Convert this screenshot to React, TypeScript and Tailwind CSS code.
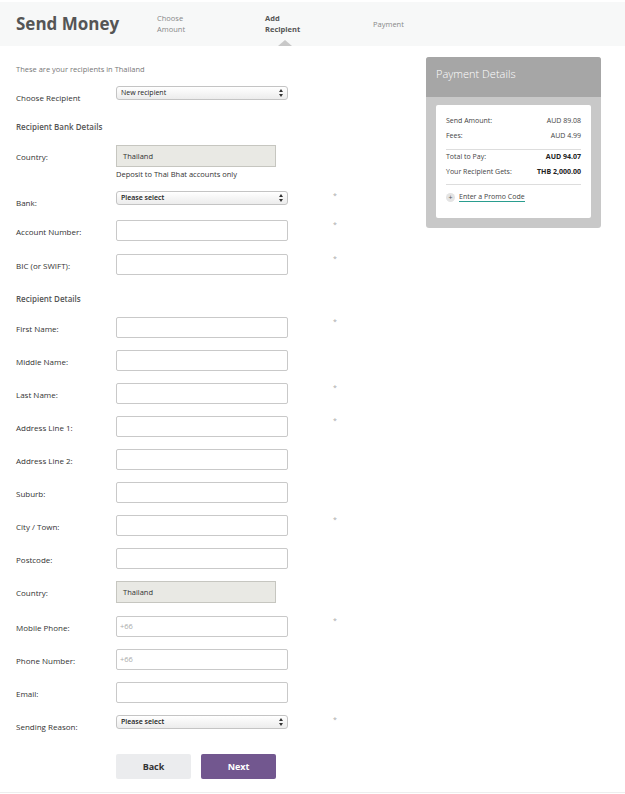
import React from 'react';

const font = { fontFamily: '"Open Sans", "Liberation Sans", sans-serif' };

type RowKind = 'text' | 'select' | 'grey';

interface FieldRow {
  label: string;
  kind: RowKind;
  mt: string;
  required?: boolean;
  value?: string;
  placeholder?: string;
  bold?: boolean;
}

const rowHeight: Record<RowKind, string> = {
  text: 'h-[21px]',
  select: 'h-[14px]',
  grey: 'h-[22px]',
};

const Arrows = () => (
  <svg width="4" height="8" viewBox="0 0 4 8" className="absolute right-[4px] top-[2px]">
    <path d="M2 0 L4 3 L0 3 Z" fill="#333" />
    <path d="M2 8 L4 5 L0 5 Z" fill="#333" />
  </svg>
);

const Row = ({ label, kind, mt, required, value, placeholder, bold }: FieldRow) => (
  <div className={`flex items-start ${rowHeight[kind]} ${mt}`}>
    <div className="w-[100px] shrink-0 pt-[7px] text-[8px] leading-[10px] text-[#333]">{label}</div>
    {kind === 'text' && (
      <div className="h-[21px] w-[172px] rounded-[2px] border border-[#c9c9c9] bg-white pl-[3px] text-[7.5px] leading-[19px] text-[#aaa]">
        {placeholder}
      </div>
    )}
    {kind === 'select' && (
      <div
        className={`relative h-[14px] w-[172px] rounded-[3px] border border-[#c4c4c4] bg-gradient-to-b from-white to-[#ececec] pl-[4px] text-[7px] leading-[12px] text-[#222] ${
          bold ? 'font-semibold' : ''
        }`}
      >
        {value}
        <Arrows />
      </div>
    )}
    {kind === 'grey' && (
      <div className="h-[22px] w-[160px] border border-[#c6c6c0] bg-[#e9e9e4] pl-[6px] text-[7.5px] leading-[20px] text-[#333]">
        {value}
      </div>
    )}
    {required && <div className="ml-[45px] mt-[1px] text-[7px] leading-[8px] text-[#aaa]">*</div>}
  </div>
);

const Heading = ({ children, mt }: { children: React.ReactNode; mt: string }) => (
  <div className={`${mt} text-[8px] font-semibold leading-[10px] text-[#555]`}>{children}</div>
);

const recipientRows: FieldRow[] = [
  { label: 'First Name:', kind: 'text', mt: 'mt-[13px]', required: true },
  { label: 'Middle Name:', kind: 'text', mt: 'mt-[12px]' },
  { label: 'Last Name:', kind: 'text', mt: 'mt-[12px]', required: true },
  { label: 'Address Line 1:', kind: 'text', mt: 'mt-[12px]', required: true },
  { label: 'Address Line 2:', kind: 'text', mt: 'mt-[12px]' },
  { label: 'Suburb:', kind: 'text', mt: 'mt-[12px]' },
  { label: 'City / Town:', kind: 'text', mt: 'mt-[12px]', required: true },
  { label: 'Postcode:', kind: 'text', mt: 'mt-[12px]' },
  { label: 'Country:', kind: 'grey', mt: 'mt-[12px]', value: 'Thailand' },
  { label: 'Mobile Phone:', kind: 'text', mt: 'mt-[13px]', required: true, placeholder: '+66' },
  { label: 'Phone Number:', kind: 'text', mt: 'mt-[12px]', placeholder: '+66' },
  { label: 'Email:', kind: 'text', mt: 'mt-[12px]' },
  { label: 'Sending Reason:', kind: 'select', mt: 'mt-[12px]', required: true, value: 'Please select', bold: true },
];

const Step = ({ lines, active }: { lines: string[]; active?: boolean }) => (
  <div
    className={`relative flex h-full w-[108px] flex-col justify-center text-[7.5px] leading-[11px] ${
      active ? 'font-bold text-[#555]' : 'text-[#888]'
    }`}
  >
    {lines.map((l) => (
      <span key={l}>{l}</span>
    ))}
    {active && (
      <div className="absolute bottom-0 left-[13px] h-0 w-0 border-x-[7px] border-b-[6px] border-x-transparent border-b-[#c8c8c8]" />
    )}
  </div>
);

const SummaryLine = ({ left, right, strong }: { left: string; right: string; strong?: boolean }) => (
  <div className="flex h-[15px] items-center justify-between text-[7px] text-[#444]">
    <span>{left}</span>
    <span className={strong ? 'font-bold text-[#222]' : ''}>{right}</span>
  </div>
);

export default function App() {
  return (
    <div style={font} className="min-h-[794px] w-[625px] bg-white">
      <div className="mt-[2px] flex h-[44px] items-center bg-[#f7f8f8]">
        <div className="w-[157px] pl-4 text-[17px] font-bold text-[#555]">Send Money</div>
        <Step lines={['Choose', 'Amount']} />
        <Step lines={['Add', 'Recipient']} active />
        <Step lines={['Payment']} />
      </div>

      <div className="flex">
        <div className="w-[426px] pl-4 pt-[18px]">
          <div className="text-[7.5px] leading-[10px] text-[#777]">These are your recipients in Thailand</div>
          <Row label="Choose Recipient" kind="select" mt="mt-[12px]" value="New recipient" />

          <Heading mt="mt-[22px]">Recipient Bank Details</Heading>
          <Row label="Country:" kind="grey" mt="mt-[13px]" value="Thailand" />
          <div className="ml-[100px] mt-[2px] text-[7.5px] leading-[10px] text-[#333]">Deposit to Thai Bhat accounts only</div>
          <Row label="Bank:" kind="select" mt="mt-[12px]" required value="Please select" bold />
          <Row label="Account Number:" kind="text" mt="mt-[15px]" required />
          <Row label="BIC (or SWIFT):" kind="text" mt="mt-[13px]" required />

          <Heading mt="mt-[19px]">Recipient Details</Heading>
          {recipientRows.map((r) => (
            <Row key={r.label + r.mt} {...r} />
          ))}

          <div className="ml-[100px] mt-[25px] flex gap-[10px]">
            <button className="h-[25px] w-[75px] rounded-[2px] bg-[#ebecee] text-[9px] font-bold text-[#333]">Back</button>
            <button className="h-[25px] w-[75px] rounded-[2px] bg-[#72578f] text-[9px] font-bold text-white">Next</button>
          </div>
        </div>

        <div className="mt-[11px] h-[171px] w-[175px] self-start rounded-[3px] bg-[#c8c8c8]">
          <div className="h-[40px] rounded-t-[3px] bg-[#a6a6a6] pl-[10px] pt-[10px] text-[11px] font-light leading-[14px] text-white">
            Payment Details
          </div>
          <div className="mx-[10px] mt-[8px] h-[113px] rounded-[2px] bg-white px-[10px] pt-[9px]">
            <SummaryLine left="Send Amount:" right="AUD 89.08" />
            <SummaryLine left="Fees:" right="AUD 4.99" />
            <div className="mt-[5px] border-t border-[#ddd]" />
            <SummaryLine left="Total to Pay:" right="AUD 94.07" strong />
            <SummaryLine left="Your Recipient Gets:" right="THB 2,000.00" strong />
            <div className="mt-[4px] border-t border-[#ddd]" />
            <div className="mt-[7px] flex items-center gap-[4px] text-[7px] text-[#444]">
              <div className="flex h-[9px] w-[9px] items-center justify-center rounded-full bg-[#e4e4e4] text-[7px] leading-none text-[#555]">
                +
              </div>
              <span className="border-b border-[#2a9d8f] leading-[9px]">Enter a Promo Code</span>
            </div>
          </div>
        </div>
      </div>

      <div className="mt-[13px] border-t border-[#eee]" />
    </div>
  );
}
